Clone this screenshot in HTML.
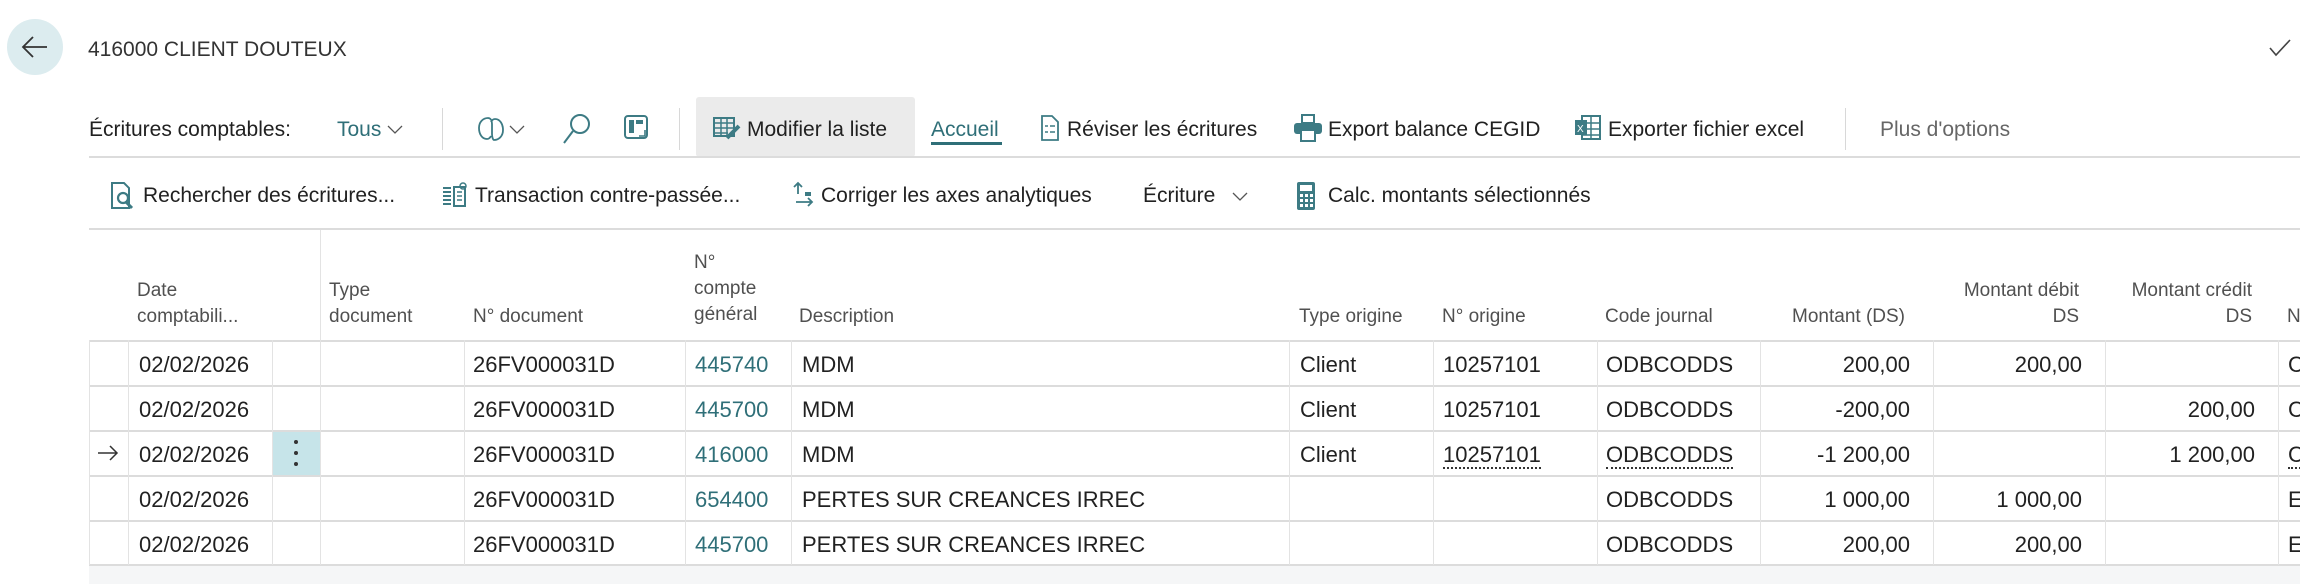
<!DOCTYPE html>
<html><head><meta charset="utf-8"><style>
*{margin:0;padding:0;box-sizing:border-box}
body{width:2300px;height:584px;background:#fff;font-family:"Segoe UI","Liberation Sans",sans-serif;color:#212121;position:relative;overflow:hidden}
.a{position:absolute;white-space:nowrap}
.t{font-size:21px;line-height:26px}
.rows .t{font-size:22px;margin-top:2px}
.h{font-size:19px;line-height:26px;color:#505050}
.lnk{color:#2f6f78}
.r{text-align:right}
.hl{position:absolute;background:#dcdcdc;height:2px}
.vl{position:absolute;background:#e3e3e3;width:1px}
.ic{position:absolute}
.u{border-bottom:2px dotted #333;padding-bottom:0}
</style></head><body>
<!-- back button -->
<div class="a" style="left:7px;top:19px;width:56px;height:56px;border-radius:50%;background:#dcecef"></div>
<svg class="ic" style="left:20px;top:34px" width="30" height="26" viewBox="0 0 30 26"><path d="M27 13H4M13 3L3 13l10 10" fill="none" stroke="#333" stroke-width="1.8"/></svg>
<div class="a" style="left:88px;top:37px;font-size:21px;line-height:26px;color:#333">416000 CLIENT DOUTEUX</div>
<svg class="ic" style="left:2268px;top:38px" width="24" height="20"><path d="M2 10l6 7L22 2" fill="none" stroke="#444" stroke-width="1.6"/></svg>

<!-- toolbar 1 -->
<div class="a" style="left:696px;top:97px;width:219px;height:60px;background:#ebebeb;border-radius:3px"></div>
<div class="a t" style="left:89px;top:117px">Écritures comptables:</div>
<div class="a t lnk" style="left:337px;top:117px">Tous</div>
<svg class="ic" style="left:387px;top:124px" width="16" height="12"><path d="M1 2l7 7 7-7" fill="none" stroke="#555" stroke-width="1.3"/></svg>
<div class="vl" style="left:442px;top:108px;height:42px;background:#d8d8d8"></div>
<svg class="ic" style="left:476px;top:114px" width="30" height="30" viewBox="0 0 30 30"><path d="M12 4c-5 0-9 4-9 10s3 11 8 11c2 0 3-1 4-3M18 26c5 0 9-4 9-10S24 5 19 5c-2 0-3 1-4 3M12 4c3 0 4 3 4 6v10c0 3 1 6 2 6" fill="none" stroke="#3d7b84" stroke-width="1.8"/></svg>
<svg class="ic" style="left:509px;top:124px" width="16" height="12"><path d="M1 2l7 7 7-7" fill="none" stroke="#555" stroke-width="1.3"/></svg>
<svg class="ic" style="left:562px;top:112px" width="30" height="34"><circle cx="18" cy="12" r="9" fill="none" stroke="#3d7b84" stroke-width="2"/><path d="M11 19L2 31" stroke="#3d7b84" stroke-width="2"/></svg>
<svg class="ic" style="left:623px;top:114px" width="26" height="28"><rect x="2" y="2" width="22" height="22" rx="3" fill="none" stroke="#3d7b84" stroke-width="2"/><rect x="6" y="6" width="5" height="13" fill="#3d7b84"/><rect x="13" y="6" width="7" height="4" fill="#3d7b84"/><path d="M16 22h6v-6" fill="none" stroke="#3d7b84" stroke-width="1.6"/></svg>
<div class="vl" style="left:679px;top:108px;height:42px;background:#d8d8d8"></div>
<svg class="ic" style="left:713px;top:116px" width="28" height="24"><rect x="1" y="2" width="20" height="18" fill="none" stroke="#3d7b84" stroke-width="2"/><path d="M1 7h20M1 12h20M1 17h14M8 2v18M14 2v18" stroke="#3d7b84" stroke-width="1.5"/><path d="M14 22l12-12" stroke="#3d7b84" stroke-width="4"/></svg>
<div class="a t" style="left:747px;top:117px">Modifier la liste</div>
<div class="a t lnk" style="left:931px;top:117px">Accueil</div>
<div class="a" style="left:931px;top:142px;width:71px;height:3px;background:#2f6f78"></div>
<svg class="ic" style="left:1040px;top:114px" width="20" height="28"><path d="M2 2h10l6 6v18H2z" fill="none" stroke="#3d7b84" stroke-width="1.8"/><path d="M5 12h3M10 12h5M5 18h3M10 18h5" stroke="#3d7b84" stroke-width="1.6"/></svg>
<div class="a t" style="left:1067px;top:117px">Réviser les écritures</div>
<svg class="ic" style="left:1293px;top:114px" width="30" height="28"><rect x="9" y="1" width="12" height="8" fill="none" stroke="#3d7b84" stroke-width="2"/><rect x="1" y="9" width="28" height="11" rx="3" fill="#3d7b84"/><rect x="8" y="16" width="14" height="11" fill="#fff" stroke="#3d7b84" stroke-width="2"/></svg>
<div class="a t" style="left:1328px;top:117px">Export balance CEGID</div>
<svg class="ic" style="left:1574px;top:114px" width="28" height="28"><rect x="8" y="2" width="18" height="23" fill="none" stroke="#3d7b84" stroke-width="2"/><path d="M8 9h18M8 15h18M8 21h18M17 2v23" stroke="#3d7b84" stroke-width="1.5"/><rect x="1" y="6" width="12" height="15" fill="#3d7b84"/><text x="3" y="18" font-size="10" fill="#fff" font-family="Liberation Sans">X</text></svg>
<div class="a t" style="left:1608px;top:117px">Exporter fichier excel</div>
<div class="vl" style="left:1845px;top:108px;height:42px;background:#d8d8d8"></div>
<div class="a t" style="left:1880px;top:117px;color:#666">Plus d'options</div>
<div class="hl" style="left:89px;top:156px;width:2211px"></div>

<!-- toolbar 2 -->
<svg class="ic" style="left:110px;top:181px" width="26" height="30"><path d="M2 2h12l5 5v20H2z" fill="none" stroke="#3d7b84" stroke-width="2"/><circle cx="13" cy="17" r="5" fill="none" stroke="#3d7b84" stroke-width="2.2"/><path d="M16 21l6 6" stroke="#3d7b84" stroke-width="3"/></svg>
<div class="a t" style="left:143px;top:183px">Rechercher des écritures...</div>
<svg class="ic" style="left:441px;top:182px" width="28" height="28"><path d="M2 6h8M2 10h8M2 14h8M2 18h8M2 22h8" stroke="#3d7b84" stroke-width="2"/><rect x="13" y="5" width="11" height="19" fill="none" stroke="#3d7b84" stroke-width="2"/><path d="M16 10h5M16 14h5M16 18h5" stroke="#3d7b84" stroke-width="1.6"/><circle cx="22" cy="4" r="3" fill="none" stroke="#3d7b84" stroke-width="1.5"/></svg>
<div class="a t" style="left:475px;top:183px">Transaction contre-passée...</div>
<svg class="ic" style="left:791px;top:180px" width="26" height="30"><path d="M7 14V3M3 7l4-4 4 4M5 22h16M17 18l4 4-4 4" fill="none" stroke="#3d7b84" stroke-width="1.8"/><path d="M14 12h6v4h-6z" fill="#3d7b84"/></svg>
<div class="a t" style="left:821px;top:183px">Corriger les axes analytiques</div>
<div class="a t" style="left:1143px;top:183px">Écriture</div>
<svg class="ic" style="left:1232px;top:191px" width="16" height="12"><path d="M1 2l7 7 7-7" fill="none" stroke="#555" stroke-width="1.3"/></svg>
<svg class="ic" style="left:1296px;top:181px" width="20" height="30"><rect x="1" y="1" width="18" height="28" rx="2" fill="#3d7b84"/><rect x="4" y="4" width="12" height="6" fill="#fff"/><g fill="#fff"><rect x="4" y="13" width="3" height="3"/><rect x="9" y="13" width="3" height="3"/><rect x="14" y="13" width="3" height="3"/><rect x="4" y="18" width="3" height="3"/><rect x="9" y="18" width="3" height="3"/><rect x="14" y="18" width="3" height="3"/><rect x="4" y="23" width="3" height="3"/><rect x="9" y="23" width="3" height="3"/><rect x="14" y="23" width="3" height="3"/></g></svg>
<div class="a t" style="left:1328px;top:183px">Calc. montants sélectionnés</div>
<div class="hl" style="left:89px;top:228px;width:2211px"></div>

<!-- header -->
<div class="vl" style="left:320px;top:230px;height:111px"></div>
<div class="a h" style="left:137px;top:278px">Date<br>comptabili...</div>
<div class="a h" style="left:329px;top:278px">Type<br>document</div>
<div class="a h" style="left:473px;top:304px">N° document</div>
<div class="a h" style="left:694px;top:250px">N°<br>compte<br>général</div>
<div class="a h" style="left:799px;top:304px">Description</div>
<div class="a h" style="left:1299px;top:304px">Type origine</div>
<div class="a h" style="left:1442px;top:304px">N° origine</div>
<div class="a h" style="left:1605px;top:304px">Code journal</div>
<div class="a h r" style="left:1700px;width:205px;top:304px">Montant (DS)</div>
<div class="a h r" style="left:1880px;width:199px;top:278px">Montant débit<br>DS</div>
<div class="a h r" style="left:2050px;width:202px;top:278px">Montant crédit<br>DS</div>
<div class="a h" style="left:2287px;top:304px">N</div>

<!-- grid -->
<div class="a" style="left:273px;top:430px;width:47px;height:45px;background:#c6e4e9"></div>
<div class="a" style="left:294px;top:440px;width:4px;height:4px;border-radius:2px;background:#333"></div>
<div class="a" style="left:294px;top:451px;width:4px;height:4px;border-radius:2px;background:#333"></div>
<div class="a" style="left:294px;top:462px;width:4px;height:4px;border-radius:2px;background:#333"></div>
<div class="hl" style="left:89px;top:340px;width:2211px"></div>
<div class="hl" style="left:89px;top:385px;width:2211px"></div>
<div class="hl" style="left:89px;top:430px;width:2211px"></div>
<div class="hl" style="left:89px;top:475px;width:2211px"></div>
<div class="hl" style="left:89px;top:520px;width:2211px"></div>
<div class="hl" style="left:89px;top:564px;width:2211px"></div>
<div class="a" style="left:89px;top:566px;width:2211px;height:18px;background:#f5f6f7"></div>
<div class="vl" style="left:89px;top:340px;height:225px"></div>
<div class="vl" style="left:128px;top:340px;height:225px"></div>
<div class="vl" style="left:272px;top:340px;height:225px"></div>
<div class="vl" style="left:320px;top:340px;height:225px"></div>
<div class="vl" style="left:464px;top:340px;height:225px"></div>
<div class="vl" style="left:685px;top:340px;height:225px"></div>
<div class="vl" style="left:791px;top:340px;height:225px"></div>
<div class="vl" style="left:1289px;top:340px;height:225px"></div>
<div class="vl" style="left:1433px;top:340px;height:225px"></div>
<div class="vl" style="left:1597px;top:340px;height:225px"></div>
<div class="vl" style="left:1760px;top:340px;height:225px"></div>
<div class="vl" style="left:1933px;top:340px;height:225px"></div>
<div class="vl" style="left:2105px;top:340px;height:225px"></div>
<div class="vl" style="left:2278px;top:340px;height:225px"></div>
<svg class="ic" style="left:97px;top:445px" width="22" height="16"><path d="M1 8h19M13 1l7 7-7 7" fill="none" stroke="#333" stroke-width="1.5"/></svg>

<div class="rows">
<div class="a t" style="left:139px;top:350px">02/02/2026</div>
<div class="a t" style="left:473px;top:350px">26FV000031D</div>
<div class="a t lnk" style="left:695px;top:350px">445740</div>
<div class="a t" style="left:802px;top:350px">MDM</div>
<div class="a t" style="left:1300px;top:350px">Client</div>
<div class="a t" style="left:1443px;top:350px">10257101</div>
<div class="a t" style="left:1606px;top:350px">ODBCODDS</div>
<div class="a t r" style="left:1760px;width:150px;top:350px">200,00</div>
<div class="a t r" style="left:1933px;width:149px;top:350px">200,00</div>
<div class="a t" style="left:2288px;top:350px">C</div>

<div class="a t" style="left:139px;top:395px">02/02/2026</div>
<div class="a t" style="left:473px;top:395px">26FV000031D</div>
<div class="a t lnk" style="left:695px;top:395px">445700</div>
<div class="a t" style="left:802px;top:395px">MDM</div>
<div class="a t" style="left:1300px;top:395px">Client</div>
<div class="a t" style="left:1443px;top:395px">10257101</div>
<div class="a t" style="left:1606px;top:395px">ODBCODDS</div>
<div class="a t r" style="left:1760px;width:150px;top:395px">-200,00</div>
<div class="a t r" style="left:2105px;width:150px;top:395px">200,00</div>
<div class="a t" style="left:2288px;top:395px">C</div>

<div class="a t" style="left:139px;top:440px">02/02/2026</div>
<div class="a t" style="left:473px;top:440px">26FV000031D</div>
<div class="a t lnk" style="left:695px;top:440px">416000</div>
<div class="a t" style="left:802px;top:440px">MDM</div>
<div class="a t" style="left:1300px;top:440px">Client</div>
<div class="a t" style="left:1443px;top:440px"><span class="u">10257101</span></div>
<div class="a t" style="left:1606px;top:440px"><span class="u">ODBCODDS</span></div>
<div class="a t r" style="left:1760px;width:150px;top:440px">-1 200,00</div>
<div class="a t r" style="left:2105px;width:150px;top:440px">1 200,00</div>
<div class="a t" style="left:2288px;top:440px"><span class="u">C</span></div>

<div class="a t" style="left:139px;top:485px">02/02/2026</div>
<div class="a t" style="left:473px;top:485px">26FV000031D</div>
<div class="a t lnk" style="left:695px;top:485px">654400</div>
<div class="a t" style="left:802px;top:485px">PERTES SUR CREANCES IRREC</div>
<div class="a t" style="left:1606px;top:485px">ODBCODDS</div>
<div class="a t r" style="left:1760px;width:150px;top:485px">1 000,00</div>
<div class="a t r" style="left:1933px;width:149px;top:485px">1 000,00</div>
<div class="a t" style="left:2288px;top:485px">E</div>

<div class="a t" style="left:139px;top:530px">02/02/2026</div>
<div class="a t" style="left:473px;top:530px">26FV000031D</div>
<div class="a t lnk" style="left:695px;top:530px">445700</div>
<div class="a t" style="left:802px;top:530px">PERTES SUR CREANCES IRREC</div>
<div class="a t" style="left:1606px;top:530px">ODBCODDS</div>
<div class="a t r" style="left:1760px;width:150px;top:530px">200,00</div>
<div class="a t r" style="left:1933px;width:149px;top:530px">200,00</div>
<div class="a t" style="left:2288px;top:530px">E</div>
</div>
</body></html>
